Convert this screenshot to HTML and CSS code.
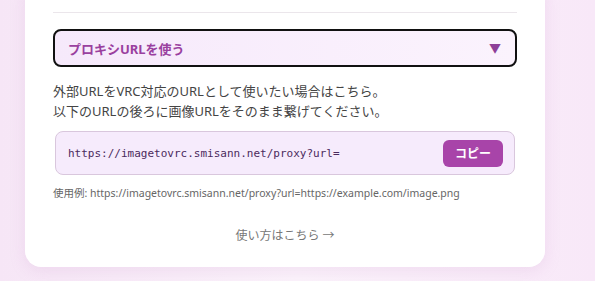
FILE: index.html
```html
<!DOCTYPE html>
<html lang="ja">
<head>
    <meta charset="UTF-8">
    <title>imagetovrc</title>
    <link rel="stylesheet" href="styles.css">
</head>
<body>
    <div class="page">
        <div class="card">
            <!-- プロキシURL -->
            <section class="proxy">
                <div class="select">
                    <span class="select-label">プロキシURLを使う</span>
                    <span class="select-arrow">▼</span>
                </div>

                <p class="desc">
                    外部URLをVRC対応のURLとして使いたい場合はこちら。<br>
                    以下のURLの後ろに画像URLをそのまま繋げてください。
                </p>

                <div class="url-box">
                    <code class="url-text">https://imagetovrc.smisann.net/proxy?url=</code>
                    <button class="copy-btn">コピー</button>
                </div>

                <p class="example">使用例: https://imagetovrc.smisann.net/proxy?url=https://example.com/image.png</p>
            </section>

            <a class="howto" href="#">使い方はこちら →</a>
        </div>
    </div>
</body>
</html>
```

FILE: styles.css
```css
/* ページ全体 */
body {
    margin: 0;
    font-family: "Noto Sans", "Noto Sans CJK JP", sans-serif;
    background: linear-gradient(90deg, #f6e6f6 0%, #fbf3fb 50%, #f8e8f8 100%);
    color: #444;
}

.page {
    padding: 0 50px 16px 25px;
    height: 281px;
    box-sizing: border-box;
    overflow: hidden;
}

/* カード */
.card {
    margin-top: -20px;
    width: 520px;
    background: #ffffff;
    border-radius: 16px;
    box-shadow: 0 4px 16px rgba(200, 140, 200, 0.18);
    padding: 32px 28px 23px 28px;
    box-sizing: border-box;
}

.proxy {
    border-top: 1px solid #ebe6eb;
    padding-top: 16px;
}

/* セレクト */
.select {
    display: flex;
    align-items: center;
    justify-content: space-between;
    height: 38px;
    box-sizing: border-box;
    border: 2px solid #111;
    border-radius: 8px;
    padding: 0 14px 0 13px;
    background: linear-gradient(90deg, #f6e9fb, #fbf3fd);
}

.select-label {
    font-size: 13px;
    font-weight: bold;
    color: #9a409f;
}

.select-arrow {
    font-size: 12px;
    color: #8e3f98;
}

/* 説明文 */
.desc {
    margin: 14px 0 0 0;
    font-size: 13px;
    line-height: 20px;
    color: #444;
}

/* URL ボックス */
.url-box {
    display: flex;
    align-items: center;
    justify-content: space-between;
    margin: 10px 2px 0 2px;
    height: 44px;
    box-sizing: border-box;
    border: 1px solid #d9c7dd;
    border-radius: 8px;
    background: #f6ebfc;
    padding: 0 11px 0 12px;
}

.url-text {
    font-family: "DejaVu Sans Mono", monospace;
    font-size: 11px;
    color: #4b2a5c;
}

.copy-btn {
    border: none;
    border-radius: 6px;
    background: #a844a9;
    color: #fff;
    font-family: inherit;
    font-size: 12px;
    font-weight: bold;
    width: 60px;
    height: 27px;
    padding: 0;
}

.example {
    margin: 10px 0 0 0;
    font-size: 10.5px;
    color: #666;
}

/* 使い方リンク */
.howto {
    display: block;
    margin-top: 26px;
    text-align: center;
    font-size: 12px;
    color: #777;
    text-decoration: none;
}
```
